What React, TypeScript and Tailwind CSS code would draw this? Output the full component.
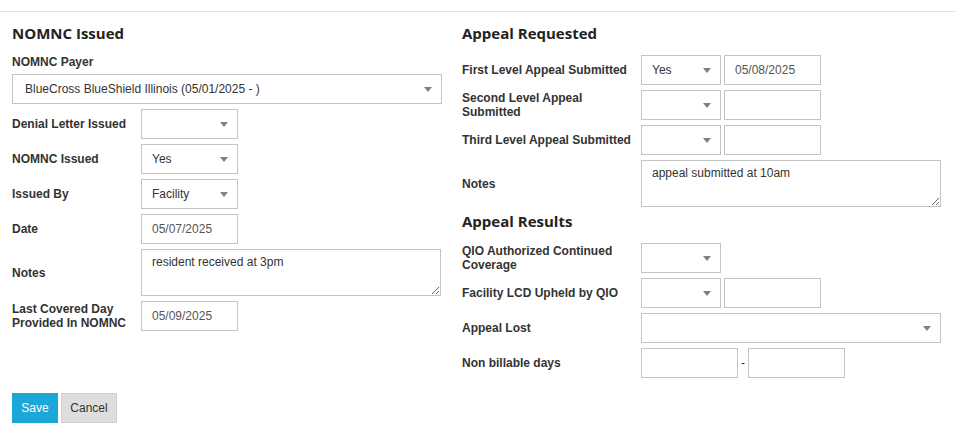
import { ReactNode } from "react";

const FONT = { fontFamily: '"Liberation Sans", Arial, sans-serif' };
const HEAD = { fontFamily: '"Open Sans", "Liberation Sans", sans-serif' };

function Caret() {
  return (
    <span className="h-0 w-0 border-x-[4px] border-t-[5px] border-x-transparent border-t-[#808080]" />
  );
}

function SelectBox({ value, className = "w-[97px]" }: { value?: string; className?: string }) {
  return (
    <div
      className={`flex h-[30px] items-center justify-between border border-[#c4c4c4] bg-white pl-[10px] pr-[9px] text-[12px] text-[#333] ${className}`}
    >
      <span>{value}</span>
      <Caret />
    </div>
  );
}

function TextBox({ value, className = "w-[97px]" }: { value?: string; className?: string }) {
  return (
    <div
      className={`flex h-[30px] items-center border border-[#c4c4c4] bg-white px-[10px] text-[12px] text-[#555] ${className}`}
    >
      {value}
    </div>
  );
}

function NotesBox({ value, className }: { value: string; className: string }) {
  return (
    <textarea
      defaultValue={value}
      className={`h-[47px] resize border border-[#c4c4c4] bg-white px-[10px] pt-[4px] text-[12px] leading-[16px] text-[#333] outline-none ${className}`}
      style={FONT}
    />
  );
}

function Row({
  label,
  labelWidth,
  children,
  className = "",
  tall = false,
}: {
  label: ReactNode;
  labelWidth: string;
  children: ReactNode;
  className?: string;
  tall?: boolean;
}) {
  return (
    <div className={`flex items-center ${className}`}>
      <div
        className={`${labelWidth} shrink-0 text-[12px] font-bold leading-[14px] text-[#333]`}
      >
        {label}
      </div>
      <div className={`flex items-center ${tall ? "" : "h-[30px]"}`}>{children}</div>
    </div>
  );
}

function Heading({ children, className = "" }: { children: ReactNode; className?: string }) {
  return (
    <h3 className={`text-[15px] font-bold leading-[20px] text-[#222] ${className}`} style={HEAD}>
      {children}
    </h3>
  );
}

export default function App() {
  const L = "w-[129px]";
  const R = "w-[179px]";
  return (
    <div className="h-[426px] w-[955px] bg-white pt-[11px]" style={FONT}>
      <div className="flex border-t border-[#e3e3e3]">
        {/* left column */}
        <div className="w-[450px] pl-[12px]">
          <Heading className="mt-[11px]">NOMNC Issued</Heading>
          <div className="mt-[11px] text-[12px] font-bold leading-[16px] text-[#333]">
            NOMNC Payer
          </div>
          <SelectBox
            value="BlueCross BlueShield Illinois (05/01/2025 - )"
            className="mt-[4px] w-[430px] pl-[12px]"
          />
          <div className="mt-[5px] flex flex-col gap-[5px]">
            <Row label="Denial Letter Issued" labelWidth={L}>
              <SelectBox />
            </Row>
            <Row label="NOMNC Issued" labelWidth={L}>
              <SelectBox value="Yes" />
            </Row>
            <Row label="Issued By" labelWidth={L}>
              <SelectBox value="Facility" />
            </Row>
            <Row label="Date" labelWidth={L}>
              <TextBox value="05/07/2025" />
            </Row>
            <Row label="Notes" labelWidth={L} tall>
              <NotesBox value="resident received at 3pm" className="w-[300px]" />
            </Row>
            <Row
              label={
                <>
                  Last Covered Day
                  <br />
                  Provided In NOMNC
                </>
              }
              labelWidth={L}
            >
              <TextBox value="05/09/2025" />
            </Row>
          </div>
          <div className="mt-[62px] flex gap-[3px]">
            <button className="h-[30px] w-[46px] bg-[#1ba8d9] text-[12px] text-white">
              Save
            </button>
            <button className="h-[30px] w-[56px] border border-[#d2d2d2] bg-[#dedede] text-[12px] text-[#333]">
              Cancel
            </button>
          </div>
        </div>

        {/* right column */}
        <div className="pl-[12px]">
          <Heading className="mt-[11px]">Appeal Requested</Heading>
          <div className="mt-[12px] flex flex-col gap-[5px]">
            <Row label="First Level Appeal Submitted" labelWidth={R}>
              <SelectBox value="Yes" className="w-[80px]" />
              <TextBox value="05/08/2025" className="ml-[3px] w-[97px]" />
            </Row>
            <Row
              label={
                <>
                  Second Level Appeal
                  <br />
                  Submitted
                </>
              }
              labelWidth={R}
            >
              <SelectBox className="w-[80px]" />
              <TextBox className="ml-[3px] w-[97px]" />
            </Row>
            <Row label="Third Level Appeal Submitted" labelWidth={R}>
              <SelectBox className="w-[80px]" />
              <TextBox className="ml-[3px] w-[97px]" />
            </Row>
            <Row label="Notes" labelWidth={R} tall>
              <NotesBox value="appeal submitted at 10am" className="w-[300px]" />
            </Row>
          </div>
          <Heading className="mt-[4px]">Appeal Results</Heading>
          <div className="mt-[12px] flex flex-col gap-[5px]">
            <Row
              label={
                <>
                  QIO Authorized Continued
                  <br />
                  Coverage
                </>
              }
              labelWidth={R}
            >
              <SelectBox className="w-[80px]" />
            </Row>
            <Row label="Facility LCD Upheld by QIO" labelWidth={R}>
              <SelectBox className="w-[80px]" />
              <TextBox className="ml-[3px] w-[97px]" />
            </Row>
            <Row label="Appeal Lost" labelWidth={R}>
              <SelectBox className="w-[300px]" />
            </Row>
            <Row label="Non billable days" labelWidth={R}>
              <TextBox className="w-[97px]" />
              <span className="w-[10px] text-center text-[12px] text-[#333]">-</span>
              <TextBox className="w-[97px]" />
            </Row>
          </div>
        </div>
      </div>
    </div>
  );
}
